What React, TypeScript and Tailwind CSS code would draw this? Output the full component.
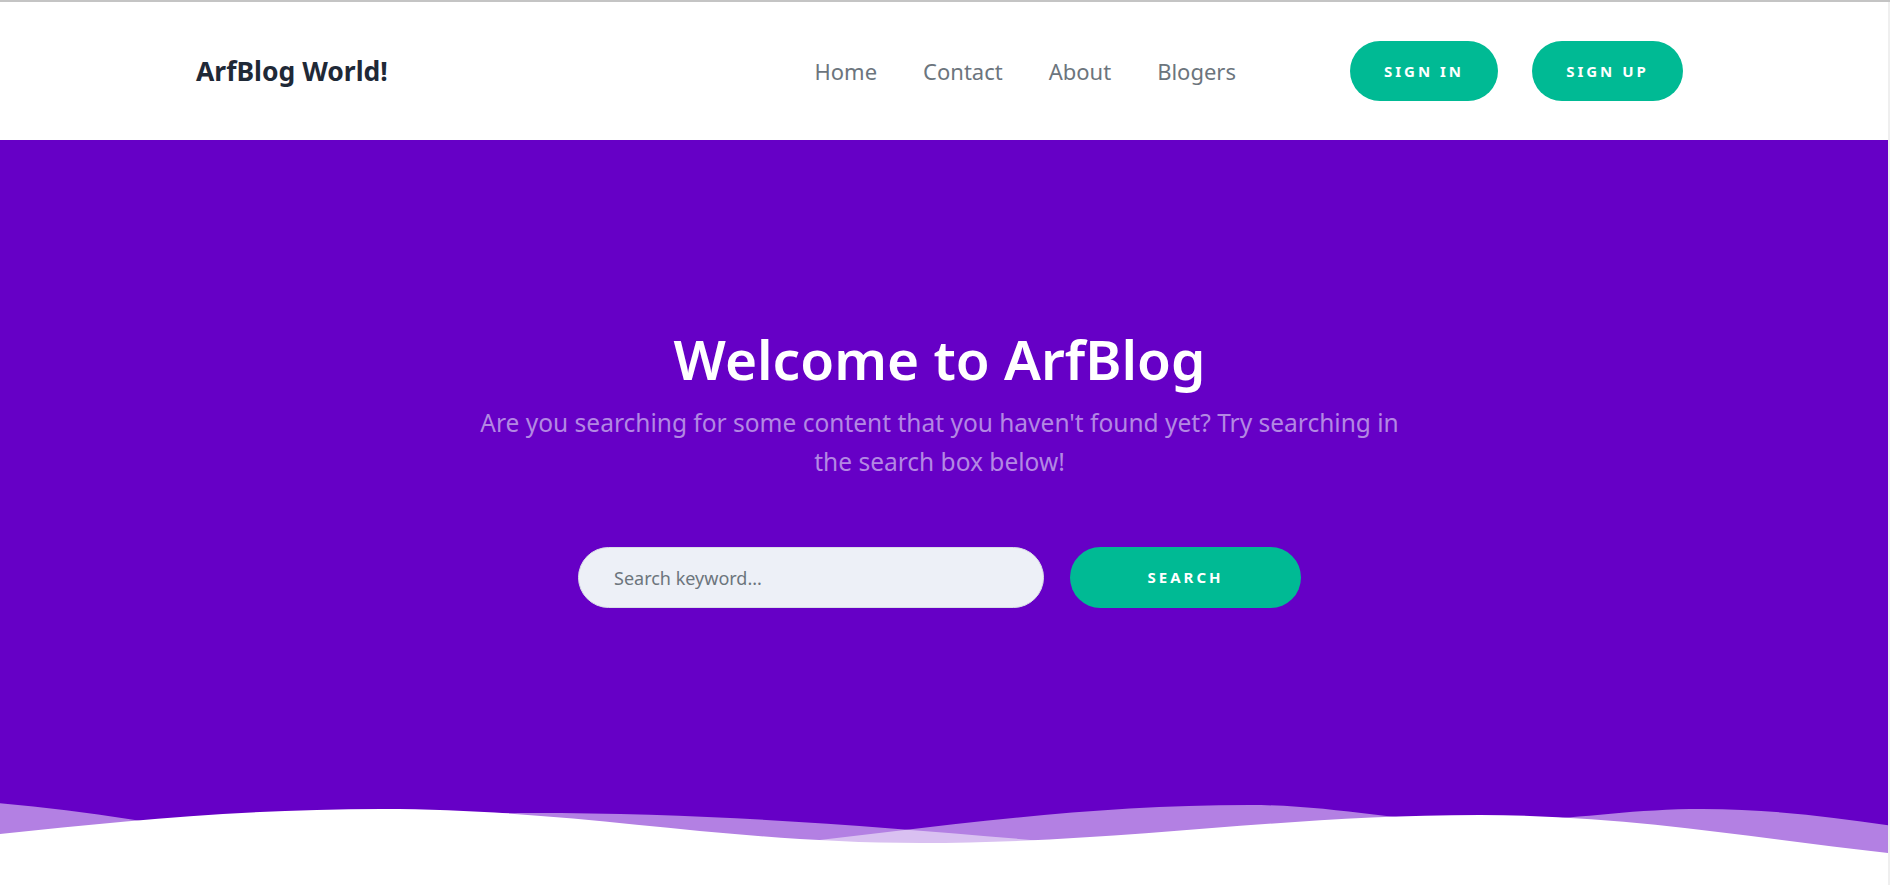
import React from "react";

const font = { fontFamily: '"Noto Sans", "Open Sans", sans-serif' };

function Wave() {
  return (
    <svg
      className="block w-full h-[105px]"
      viewBox="0 780 1888 105"
      preserveAspectRatio="none"
      aria-hidden="true"
    >
      <path
        d="M-100,799 C119,799 281,862 500,862 C773,862 977,805 1250,805 C1334,805 1396,822 1480,822 C1561,822 1621,809 1702,809 C1847,809 1955,845 2100,845 L2100,900 L-100,900 Z"
        fill="rgba(255,255,255,0.5)"
      />
      <path
        d="M-200,870 C66,870 264,813 530,813 C920,813 1210,873 1600,873 C1990,873 2280,813 2670,813 L2670,900 L-200,900 Z"
        fill="rgba(255,255,255,0.5)"
      />
      <path
        d="M-418,863 C-127,863 91,809 382,809 C578,809 724,843 920,843 C1124,843 1276,815 1480,815 C1699,815 1861,864.5 2080,864.5 L2080,900 L-418,900 Z"
        fill="#ffffff"
      />
    </svg>
  );
}

export default function App() {
  return (
    <div className="flex w-[1890px] border-t-2 border-[#c4c4c4] bg-white" style={font}>
      <div className="w-[1888px]">
        {/* Header */}
        <header className="h-[138px] flex items-center bg-white">
          <div className="ml-[196px] w-[1487px] flex items-center justify-between">
            <div className="text-[26.5px] font-bold text-[#1f2937] leading-none">ArfBlog World!</div>
            <div className="flex items-center">
              <nav className="flex items-center gap-[46px] text-[22px] text-[#6c757d]">
                <a href="#" className="leading-none">Home</a>
                <a href="#" className="leading-none">Contact</a>
                <a href="#" className="leading-none">About</a>
                <a href="#" className="leading-none">Blogers</a>
              </nav>
              <div className="ml-[114px] flex items-center gap-[34px]">
                <button className="w-[148px] h-[60px] rounded-full bg-[#00ba94] text-white text-[15px] font-bold tracking-[3px] uppercase">
                  Sign In
                </button>
                <button className="w-[151px] h-[60px] rounded-full bg-[#00ba94] text-white text-[15px] font-bold tracking-[3px] uppercase">
                  Sign Up
                </button>
              </div>
            </div>
          </div>
        </header>

        {/* Hero */}
        <section className="h-[745px] bg-[#6600c6] flex flex-col">
          <div className="w-[1879px] flex-1 flex flex-col items-center pt-[185px]">
            <h1 className="text-[55px] leading-[67px] font-semibold text-white">Welcome to ArfBlog</h1>
            <p className="mt-[11px] text-[24.5px] leading-[39px] text-[#b388e3] text-center">
              Are you searching for some content that you haven't found yet? Try searching in
              <br />
              the search box below!
            </p>
            <div className="mt-[66px] flex items-center">
              <input
                type="text"
                placeholder="Search keyword..."
                className="w-[466px] h-[61px] rounded-full bg-[#edf0f7] border border-[#d9dde6] pl-[35px] pr-4 text-[18px] text-[#495057] placeholder:text-[#6c757d] outline-none"
              />
              <button className="ml-[26px] w-[231px] h-[61px] rounded-full bg-[#00ba94] text-white text-[15px] font-bold tracking-[3px] uppercase">
                Search
              </button>
            </div>
          </div>
          <Wave />
        </section>
      </div>
      <div className="w-[2px] bg-[#efefef]" />
    </div>
  );
}
